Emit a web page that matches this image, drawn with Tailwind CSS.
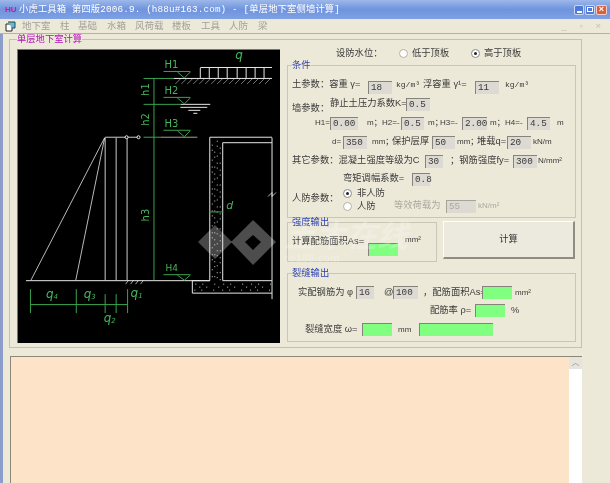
<!DOCTYPE html>
<html lang="zh-CN">
<head>
  <meta charset="UTF-8">
  <title>小虎工具箱</title>
  <script src="https://cdn.jsdelivr.net/npm/@tailwindcss/browser@4"></script>
</head>
<body class="m-0 bg-[#ece9d8]">
<div class="relative w-[610px] h-[483px] overflow-hidden flex flex-col bg-[#ece9d8] text-[#3a3a3a] text-[9.3px] leading-none whitespace-nowrap font-['Liberation_Sans','Noto_Sans_CJK_SC',sans-serif] blur-[0.4px]">

  <!-- title bar -->
  <div class="h-[19px] shrink-0 flex items-center pl-[5px] pr-[2px] bg-gradient-to-b from-[#9db8ea] via-[#6f94de] to-[#7fa0e2] text-white">
    <span class="w-[14px] text-[8px] font-bold text-[#e0109a]">HU</span>
    <span class="tracking-[0.15px] font-['Liberation_Mono','Noto_Sans_CJK_SC',monospace]">小虎工具箱 第四版2006.9. (h88u#163.com) - [单层地下室侧墙计算]</span>
    <div class="ml-auto flex gap-[1px] pr-[1px]">
      <span class="w-[10px] h-[10px] rounded-[2px] bg-[#4f78d8] border border-white/70 flex items-end justify-center pb-[1px]"><span class="w-[5px] h-[2px] bg-white"></span></span>
      <span class="w-[10px] h-[10px] rounded-[2px] bg-[#4f78d8] border border-white/70 flex items-center justify-center"><span class="w-[6px] h-[5px] border border-white"></span></span>
      <span class="w-[11px] h-[10px] rounded-[2px] bg-[#d9603f] border border-white/70 text-white text-[9px] font-bold flex items-center justify-center">×</span>
    </div>
  </div>

  <!-- menu bar -->
  <div class="h-[15px] shrink-0 flex items-center pl-[5px] pr-[4px] border-b border-[#b5b2a4] text-[#a3a19a] text-[9.5px]">
    <svg class="w-[11px] h-[11px] mr-[6px]" viewBox="0 0 11 11"><path d="M1 3h6v7H1z" fill="#fff" stroke="#222"/><path d="M3 1h7v6H7" fill="#6bb" stroke="#247"/></svg>
    <span class="w-[38px]">地下室</span>
    <span class="w-[18px]">柱</span>
    <span class="w-[29px]">基础</span>
    <span class="w-[28px]">水箱</span>
    <span class="w-[37px]">风荷载</span>
    <span class="w-[29px]">楼板</span>
    <span class="w-[28px]">工具</span>
    <span class="w-[29px]">人防</span>
    <span>梁</span>
    <span class="ml-auto tracking-[5px] text-[#c4c1b4]">_ ▫ ×</span>
  </div>

  <!-- main area -->
  <div class="flex-1 flex flex-col border-l-[3px] border-[#8d9dcb] pl-[6px] pr-[28px]">
    <fieldset class="h-[314px] shrink-0 border border-[#c4c1b2] pl-[7px] min-w-0">
      <legend class="h-[10px] leading-[10px] text-[#b410b8]">单层地下室计算</legend>
      <div class="flex pt-[5px]">
        <!-- drawing -->
        <svg class="w-[263px] h-[294px] shrink-0 bg-black border-l border-t border-[#777]" viewBox="17 49 263 294" fill="none">
          <g stroke="#e8e8e8" stroke-width="1">
            <path d="M200 66.5H272M173 77.5H272"/>
            <path d="M200 67V77M209 67V77M218 67V77M227 67V77M237 67V77M246 67V77M255 67V77M264 67V77"/>
            <path d="M175 83l5-5M181 83l5-5M187 83l5-5M193 83l5-5M199 83l5-5M205 83l5-5M211 83l5-5M217 83l5-5M223 83l5-5M229 83l5-5M235 83l5-5M241 83l5-5M247 83l5-5M253 83l5-5M259 83l5-5M265 83l5-5" stroke-width="0.7" stroke="#aaa"/>
            <path d="M180 103.5H210M180 106.5H207M188 109.5H200M193 112.5H197"/>
            <path d="M104.5 136.5H138M104.5 137V280M115.5 137V280M126.5 137V280" stroke="#ccc"/>
            <path d="M104 137L30 280M104 137L75 280" stroke-width="0.8"/>
            <path d="M25 280.5H209.5V136.5H272M222.5 280.5V142H272M222.5 280.5H272M209.5 280.5H192V293H272M272 137V299"/>
            <path d="M160 136.5H197M125 284l3-4M130 284l3-4M135 284l3-4M140 284l3-4" stroke-width="0.7"/>
            <path d="M268 196l4-4v4l4-4" stroke-width="0.8"/>
            <circle cx="126" cy="136.5" r="1.5" fill="#000"/>
            <circle cx="138" cy="136.5" r="1.5" fill="#000"/>
          </g>
          <!-- concrete speckle -->
          <g stroke="#ccc" stroke-width="1" stroke-dasharray="1 4 1 9 1 6">
            <path d="M212 144V280M214.5 151V280M217 140V280M220 147V280"/>
            <path d="M195 284H272M199 287H272M194 290H272" stroke-dasharray="1 6 1 11 1 8"/>
          </g>
          <g stroke="#38a54e" stroke-width="1">
            <path d="M153.5 77V280M143 77.5H173M143 103.5H180M143 136.5H160M163 70.5H190M177 71l7 6 6-6M163 96.5H190M177 97l7 6 6-6M163 129.5H190M177 130l7 6 6-6M163 274.5H190M177 275l7 5 6-5"/>
            <path d="M209 211.5H223M29.5 304.5H127M29.5 289V313M75.5 289V313M104.5 294V313M115.5 294V313M127 289V313"/>
          </g>
          <g fill="#45b65c" font-family="'DejaVu Sans',sans-serif">
            <text x="235" y="58" font-style="italic" font-size="12">q</text>
            <text x="164" y="67" font-size="10">H1</text>
            <text x="164" y="93" font-size="10">H2</text>
            <text x="164" y="126" font-size="10">H3</text>
            <text x="165" y="271" font-size="9">H4</text>
            <text font-size="10" transform="translate(149 95) rotate(-90)">h1</text>
            <text font-size="10" transform="translate(149 125) rotate(-90)">h2</text>
            <text font-size="10" transform="translate(149 221) rotate(-90)">h3</text>
            <text x="226" y="209" font-style="italic" font-size="11">d</text>
            <text x="45" y="298" font-style="italic" font-size="12">q<tspan font-size="7" dy="1">4</tspan></text>
            <text x="83" y="298" font-style="italic" font-size="12">q<tspan font-size="7" dy="1">3</tspan></text>
            <text x="103" y="322" font-style="italic" font-size="12">q<tspan font-size="7" dy="1">2</tspan></text>
            <text x="130" y="297" font-style="italic" font-size="12">q<tspan font-size="7" dy="1">1</tspan></text>
          </g>
        </svg>

        <!-- right column -->
        <div class="ml-[7px] -mt-[5px] w-[289px] shrink-0 flex flex-col">
          <div class="h-[16px] flex items-center pt-[3px]">
            <span class="ml-[49px] w-[63px]">设防水位：</span>
            <span class="w-[9px] h-[9px] rounded-full bg-white border border-[#b5b2a4]"></span>
            <span class="ml-[4px] w-[59px]">低于顶板</span>
            <span class="w-[9px] h-[9px] rounded-full bg-white border border-[#8a8a8a] flex items-center justify-center"><span class="w-[3px] h-[3px] rounded-full bg-[#222]"></span></span>
            <span class="ml-[4px]">高于顶板</span>
          </div>

          <fieldset class="h-[158px] shrink-0 border border-[#c9c6b6] min-w-0 pl-[4px]">
            <legend class="h-[10px] leading-[10px] text-[#2b3fb0]">条件</legend>
            <div class="h-[14px] mt-[8px] flex items-center">
              <span class="w-[76px]">土参数：容重 γ=</span>
              <span class="w-[24px] h-[13px] mt-[4px] bg-[#dcdad2] border-l border-t border-[#85837a] pl-[2px] flex items-center font-['Liberation_Mono',monospace]">18</span>
              <span class="ml-[4px] w-[27px] text-[8px] font-['Liberation_Mono',monospace]">kg/m³</span>
              <span class="w-[52px]">浮容重 γ¹=</span>
              <span class="w-[24px] h-[13px] mt-[4px] bg-[#dcdad2] border-l border-t border-[#85837a] pl-[2px] flex items-center font-['Liberation_Mono',monospace]">11</span>
              <span class="ml-[6px] text-[8px] font-['Liberation_Mono',monospace]">kg/m³</span>
            </div>
            <div class="h-[14px] mt-[5px] flex items-center">
              <span class="w-[38px] mt-[9px]">墙参数：</span>
              <span class="w-[76px]">静止土压力系数K=</span>
              <span class="w-[24px] h-[13px] bg-[#dcdad2] border-l border-t border-[#85837a] pl-[2px] flex items-center font-['Liberation_Mono',monospace]">0.5</span>
            </div>
            <div class="h-[14px] mt-[5px] flex items-center text-[8px]">
              <span class="ml-[23px] w-[15px]">H1=</span>
              <span class="w-[28px] h-[13px] bg-[#dcdad2] border-l border-t border-[#85837a] pl-[2px] flex items-center text-[9.3px] font-['Liberation_Mono',monospace]">0.00</span>
              <span class="w-[24px] pl-[9px]">m；</span>
              <span class="w-[19px]">H2=-</span>
              <span class="w-[23px] h-[13px] bg-[#dcdad2] border-l border-t border-[#85837a] pl-[2px] flex items-center text-[9.3px] font-['Liberation_Mono',monospace]">0.5</span>
              <span class="w-[16px] pl-[4px]">m；</span>
              <span class="w-[22px]">H3=-</span>
              <span class="w-[25px] h-[13px] bg-[#dcdad2] border-l border-t border-[#85837a] pl-[2px] flex items-center text-[9.3px] font-['Liberation_Mono',monospace]">2.00</span>
              <span class="w-[18px] pl-[3px]">m；</span>
              <span class="w-[22px]">H4=-</span>
              <span class="w-[23px] h-[13px] bg-[#dcdad2] border-l border-t border-[#85837a] pl-[2px] flex items-center text-[9.3px] font-['Liberation_Mono',monospace]">4.5</span>
              <span class="pl-[7px]">m</span>
            </div>
            <div class="h-[14px] mt-[5px] flex items-center">
              <span class="ml-[40px] w-[11px] text-[8px]">d=</span>
              <span class="w-[24px] h-[13px] bg-[#dcdad2] border-l border-t border-[#85837a] pl-[2px] flex items-center font-['Liberation_Mono',monospace]">350</span>
              <span class="ml-[5px] w-[20px] text-[8px]">mm；</span>
              <span class="w-[40px]">保护层厚</span>
              <span class="w-[23px] h-[13px] bg-[#dcdad2] border-l border-t border-[#85837a] pl-[2px] flex items-center font-['Liberation_Mono',monospace]">50</span>
              <span class="ml-[2px] w-[20px] text-[8px]">mm；</span>
              <span class="w-[30px]">堆载q=</span>
              <span class="w-[24px] h-[13px] bg-[#dcdad2] border-l border-t border-[#85837a] pl-[2px] flex items-center font-['Liberation_Mono',monospace]">20</span>
              <span class="ml-[2px] text-[8px]">kN/m</span>
            </div>
            <div class="h-[14px] mt-[5px] flex items-center">
              <span class="w-[133px]">其它参数：混凝土强度等级为C</span>
              <span class="w-[18px] h-[13px] bg-[#dcdad2] border-l border-t border-[#85837a] pl-[2px] flex items-center font-['Liberation_Mono',monospace]">30</span>
              <span class="ml-[7px] w-[63px]">；钢筋强度fy=</span>
              <span class="w-[24px] h-[13px] bg-[#dcdad2] border-l border-t border-[#85837a] pl-[2px] flex items-center font-['Liberation_Mono',monospace]">300</span>
              <span class="ml-[1px] text-[8px]">N/mm²</span>
            </div>
            <div class="h-[14px] mt-[4px] flex items-center">
              <span class="ml-[51px] w-[69px]">弯矩调幅系数=</span>
              <span class="w-[18px] h-[13px] bg-[#dcdad2] border-l border-t border-[#85837a] pl-[2px] flex items-center font-['Liberation_Mono',monospace]">0.8</span>
            </div>
            <div class="flex items-center h-[25px]">
              <span class="w-[51px]">人防参数：</span>
              <div class="w-[51px] flex flex-col gap-[3px] pt-[3px]">
                <div class="h-[10px] flex items-center gap-[5px]">
                  <span class="w-[9px] h-[9px] rounded-full bg-white border border-[#8a8a8a] flex items-center justify-center"><span class="w-[3px] h-[3px] rounded-full bg-[#222]"></span></span>
                  <span>非人防</span>
                </div>
                <div class="h-[10px] flex items-center gap-[5px]">
                  <span class="w-[9px] h-[9px] rounded-full bg-white border border-[#b5b2a4]"></span>
                  <span>人防</span>
                </div>
              </div>
              <div class="flex items-center mt-[15px] text-[#aaa89e]">
                <span class="w-[52px]">等效荷载为</span>
                <span class="w-[30px] h-[13px] bg-[#dcdad2] border-l border-t border-[#a5a39a] pl-[2px] flex items-center font-['Liberation_Mono',monospace]">55</span>
                <span class="ml-[2px] text-[8px]">kN/m²</span>
              </div>
            </div>
          </fieldset>

          <div class="flex -mt-[1px] h-[51px]">
            <fieldset class="w-[150px] h-[45px] shrink-0 border border-[#c9c6b6] min-w-0 pl-[4px]">
              <legend class="h-[10px] leading-[10px] text-[#2b3fb0]">强度输出</legend>
              <div class="flex items-start mt-[3px]">
                <span class="w-[76px] pt-[7px]">计算配筋面积As=</span>
                <span class="w-[30px] h-[13px] mt-[13px] bg-[#80ff80] border-l border-t border-[#85837a]"></span>
                <span class="ml-[7px] text-[8px] pt-[6px]">mm²</span>
              </div>
            </fieldset>
            <button class="ml-[6px] mt-[4px] w-[132px] h-[38px] bg-[#ece9de] border-r-2 border-b-2 border-t border-l border-t-white border-l-white border-r-[#8f8d82] border-b-[#8f8d82] text-[9.3px] text-[#333]">计算</button>
          </div>

          <fieldset class="h-[74px] shrink-0 border border-[#c9c6b6] min-w-0">
            <legend class="ml-[4px] h-[10px] leading-[10px] text-[#2b3fb0]">裂缝输出</legend>
            <div class="h-[13px] mt-[8px] flex items-center">
              <span class="ml-[10px] w-[58px]">实配钢筋为 φ</span>
              <span class="w-[18px] h-[13px] bg-[#dcdad2] border-l border-t border-[#85837a] pl-[2px] flex items-center font-['Liberation_Mono',monospace]">16</span>
              <span class="ml-[10px] w-[9px]">@</span>
              <span class="w-[25px] h-[13px] bg-[#dcdad2] border-l border-t border-[#85837a] pl-[2px] flex items-center font-['Liberation_Mono',monospace]">100</span>
              <span class="ml-[5px] w-[59px]">，配筋面积As=</span>
              <span class="w-[30px] h-[13px] bg-[#80ff80] border-l border-t border-[#85837a]"></span>
              <span class="ml-[3px] text-[8px]">mm²</span>
            </div>
            <div class="h-[13px] mt-[5px] flex items-center">
              <span class="ml-[142px] w-[45px]">配筋率 ρ=</span>
              <span class="w-[30px] h-[13px] bg-[#80ff80] border-l border-t border-[#85837a]"></span>
              <span class="ml-[6px]">%</span>
            </div>
            <div class="h-[13px] mt-[6px] flex items-center">
              <span class="ml-[17px] w-[57px]">裂缝宽度 ω=</span>
              <span class="w-[30px] h-[13px] bg-[#80ff80] border-l border-t border-[#85837a]"></span>
              <span class="ml-[6px] w-[21px] text-[8px]">mm</span>
              <span class="w-[74px] h-[13px] bg-[#80ff80] border-l border-t border-[#85837a]"></span>
            </div>
          </fieldset>
        </div>
      </div>
    </fieldset>

    <!-- result text area -->
    <div class="mt-[8px] ml-[1px] flex-1 flex border-t border-l border-[#8a8678]">
      <div class="flex-1 bg-[#fde3c7]"></div>
      <div class="w-[13px] bg-white flex flex-col">
        <div class="h-[12px] bg-[#e6e4db] flex items-center justify-center text-[#999] text-[8px]">︿</div>
      </div>
    </div>
  </div>

  <!-- watermark -->
  <svg class="absolute left-0 top-0 w-[610px] h-[483px] pointer-events-none" viewBox="0 0 610 483">
    <path d="M215 225l17 17-17 17-17-17z" fill="#fff" fill-opacity="0.28"/>
    <path d="M253 220l23 22-23 23-22-23zM253 235l-8 7 8 8 8-8z" fill="#fff" fill-opacity="0.3" fill-rule="evenodd"/>
    <text x="284" y="247" font-family="'Noto Sans CJK SC',sans-serif" font-size="31" font-weight="700" font-style="italic" fill="#fff" fill-opacity="0.22">土木在线</text>
    <text x="283" y="262" font-family="'Liberation Sans',sans-serif" font-size="11" font-weight="700" fill="#fff" fill-opacity="0.2">co188.com</text>
  </svg>
</div>
</body>
</html>
